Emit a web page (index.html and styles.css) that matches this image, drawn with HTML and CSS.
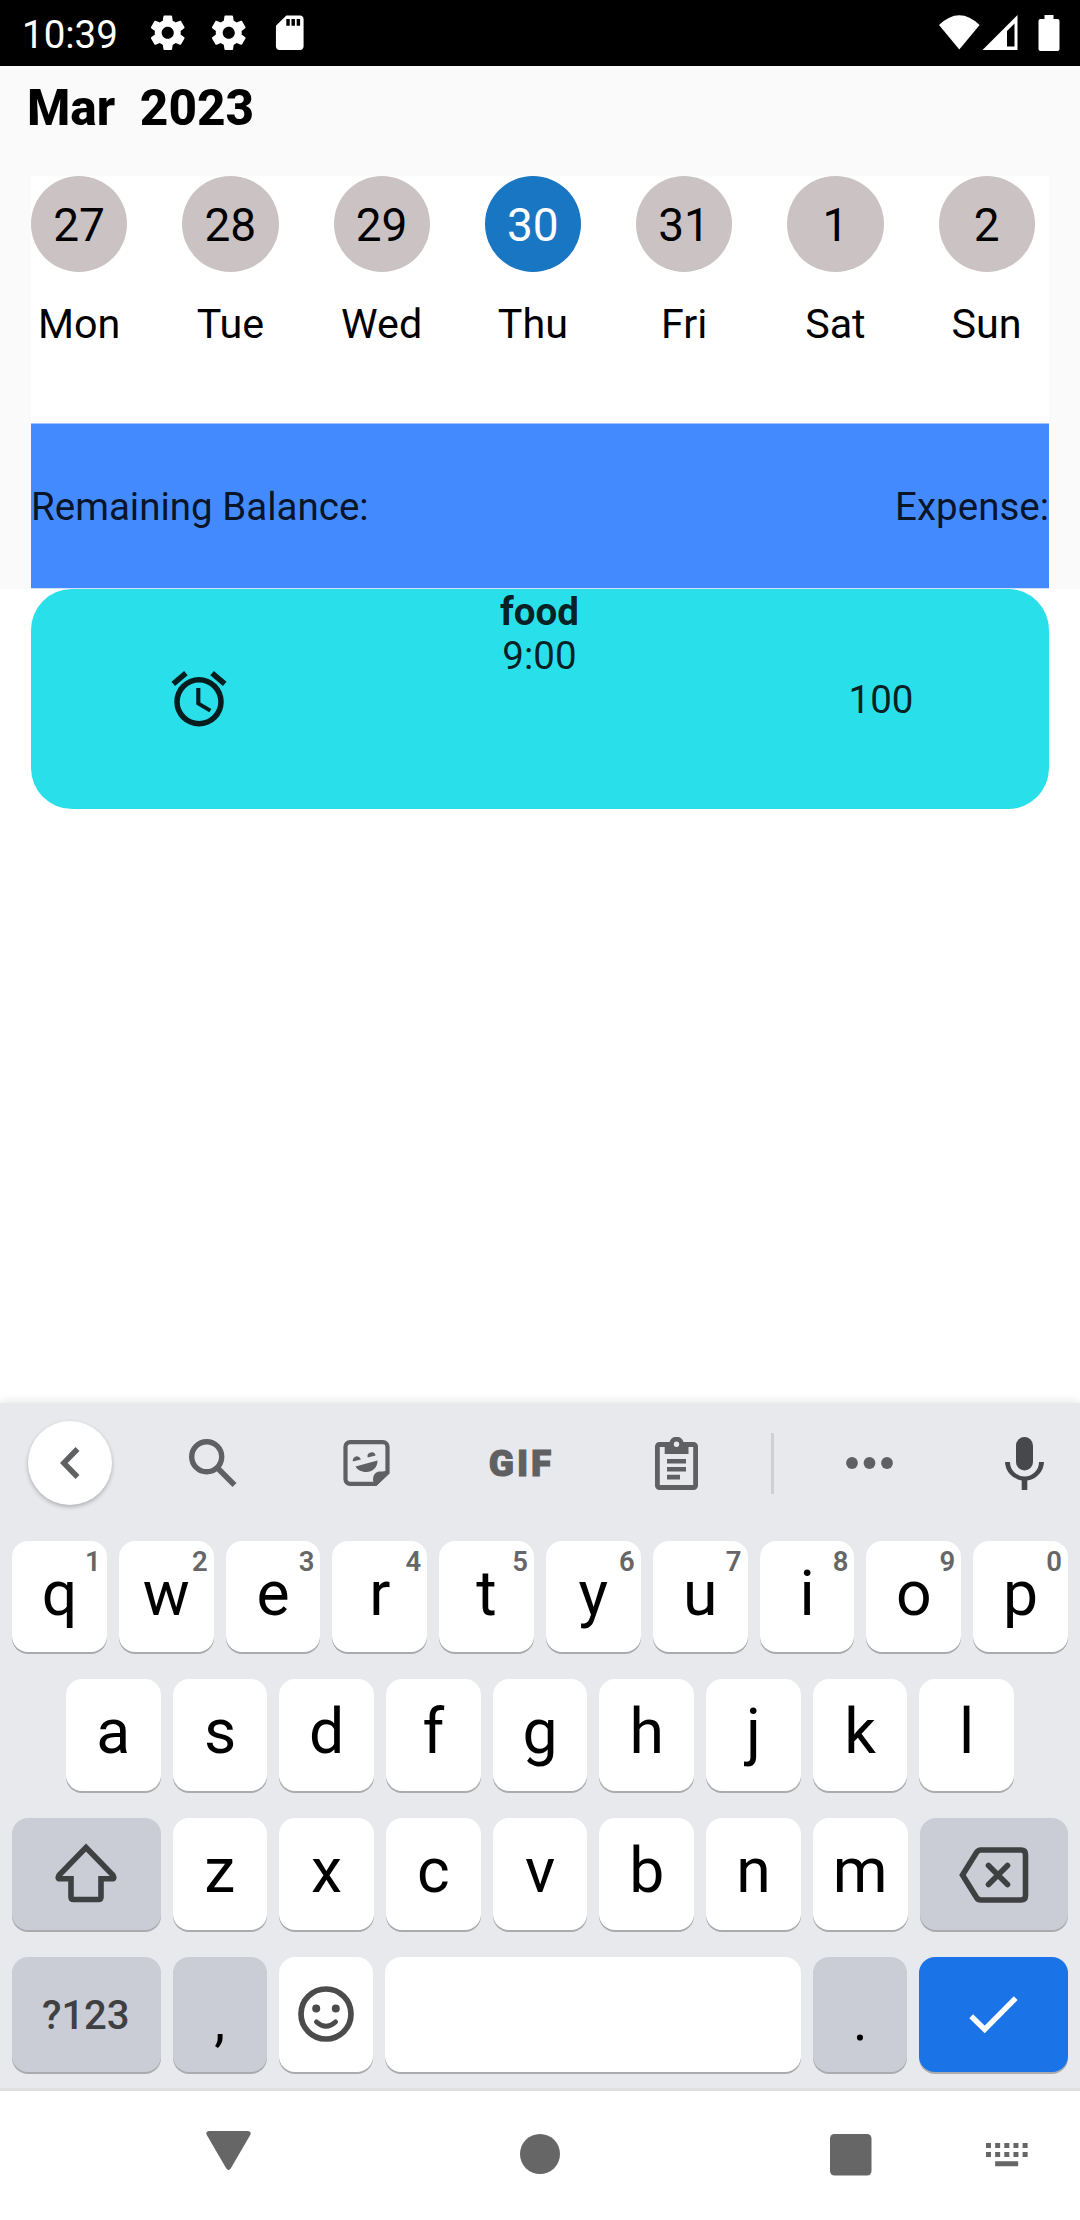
FILE: index.html
```html
<!DOCTYPE html>
<html lang="en">
<head>
<meta charset="utf-8">
<title>Expenses</title>
<link rel="stylesheet" href="styles.css">
</head>
<body>
<div class="screen">
  <header class="status">
    <span class="clock">10:39</span>
    <div class="notices">
      <svg class="notice" viewBox="0 0 24 24"><path d="M19.430 12.980c.04-.320.070-.640.070-.980s-.030-.660-.070-.980l2.110-1.650c.190-.150.240-.420.120-.640l-2-3.460c-.120-.220-.390-.300-.610-.220l-2.490 1c-.520-.400-1.080-.730-1.690-.980l-.380-2.650C14.460 2.180 14.250 2 14 2h-4c-.250 0-.460.180-.490.420l-.380 2.650c-.610.250-1.170.590-1.690.980l-2.490-1c-.230-.090-.490 0-.610.220l-2 3.460c-.130.220-.070.490.120.640l2.110 1.650c-.040.320-.070.650-.070.980s.030.660.070.980l-2.110 1.650c-.190.150-.240.420-.120.640l2 3.460c.120.220.390.300.610.220l2.490-1c.520.400 1.080.730 1.690.980l.380 2.650c.030.240.240.420.490.420h4c.250 0 .460-.180.490-.420l.380-2.650c.610-.250 1.170-.590 1.690-.980l2.490 1c.230.090.490 0 .610-.220l2-3.460c.120-.220.070-.490-.120-.640l-2.110-1.650zM12 15.500c-1.930 0-3.500-1.570-3.500-3.500s1.570-3.500 3.500-3.500 3.500 1.570 3.500 3.500-1.570 3.500-3.500 3.500z"/></svg>
      <svg class="notice" viewBox="0 0 24 24"><path d="M19.430 12.980c.04-.320.070-.640.070-.980s-.030-.660-.070-.980l2.110-1.650c.190-.150.240-.420.120-.640l-2-3.460c-.120-.220-.390-.300-.610-.220l-2.490 1c-.520-.400-1.080-.730-1.690-.980l-.380-2.650C14.460 2.180 14.250 2 14 2h-4c-.250 0-.460.180-.490.420l-.380 2.650c-.610.250-1.170.590-1.690.980l-2.490-1c-.230-.090-.490 0-.610.220l-2 3.460c-.130.220-.070.490.120.640l2.110 1.650c-.040.320-.070.650-.070.980s.030.660.070.980l-2.110 1.650c-.190.150-.240.420-.120.640l2 3.460c.120.220.390.300.610.220l2.490-1c.520.400 1.080.730 1.690.980l.380 2.650c.030.240.240.420.490.420h4c.250 0 .460-.180.490-.420l.380-2.650c.610-.250 1.170-.590 1.690-.980l2.490 1c.230.090.490 0 .610-.220l2-3.460c.120-.220.070-.490-.120-.640l-2.110-1.650zM12 15.500c-1.930 0-3.500-1.570-3.500-3.500s1.570-3.500 3.500-3.500 3.500 1.570 3.500 3.500-1.570 3.500-3.500 3.500z"/></svg>
      <svg class="notice" viewBox="0 0 24 24"><path d="M18 2h-8L4.020 8 4 20c0 1.100.9 2 2 2h12c1.100 0 2-.9 2-2V4c0-1.100-.9-2-2-2zm-6 6h-2V4h2v4zm3 0h-2V4h2v4zm3 0h-2V4h2v4z"/></svg>
    </div>
    <svg class="system" viewBox="0 0 120 36">
      <path d="M0 10Q20.300-9.500 40.600 10L20.300 34.500Z"/>
      <path fill-rule="evenodd" d="M43.500 35 78.500 0V35ZM68 16V31.500H75.500V8.500Z"/>
      <path d="M105.500 0h9v4h4a2 2 0 0 1 2 2v28a2 2 0 0 1-2 2h-17a2 2 0 0 1-2-2v-28a2 2 0 0 1 2-2h4z"/>
    </svg>
  </header>

  <main class="app">
    <section class="top">
      <h1 class="month">Mar  2023</h1>
      <div class="week">
        <div class="day"><span class="date">27</span><span class="name">Mon</span></div>
        <div class="day"><span class="date">28</span><span class="name">Tue</span></div>
        <div class="day"><span class="date">29</span><span class="name">Wed</span></div>
        <div class="day"><span class="date selected">30</span><span class="name">Thu</span></div>
        <div class="day"><span class="date">31</span><span class="name">Fri</span></div>
        <div class="day"><span class="date">1</span><span class="name">Sat</span></div>
        <div class="day"><span class="date">2</span><span class="name">Sun</span></div>
      </div>
      <div class="balance"><span>Remaining Balance:</span><span>Expense:</span></div>
    </section>
    <article class="entry">
      <svg class="alarm" viewBox="0 0 24 24"><path d="M22 5.720l-4.600-3.860-1.290 1.530 4.600 3.860L22 5.720zM7.880 3.390L6.600 1.860 2 5.710l1.290 1.530 4.590-3.850zM12.500 8H11v6l4.750 2.850.75-1.230-4-2.370V8zM12 4a9 9 0 1 0 0 18 9 9 0 0 0 0-18zm0 16a7 7 0 1 1 0-14 7 7 0 0 1 0 14z"/></svg>
      <div class="what"><b>food</b><span>9:00</span></div>
      <span class="amount">100</span>
    </article>
  </main>

  <section class="keyboard">
    <div class="tools">
      <span class="back"><svg width="20" height="32" viewBox="0 0 20 32"><path class="line" d="M17.500 2 3.800 16 17.500 30" stroke-width="5.500"/></svg></span>
      <svg width="48" height="48" viewBox="0 0 48 48"><circle class="line" cx="17.700" cy="17.700" r="15" stroke-width="5.400"/><path class="line" d="M29 29.500 45.500 46" stroke-width="5.600"/></svg>
      <svg width="47" height="46" viewBox="0 0 47 46"><path class="line" d="M7 2.200h33a4.500 4.500 0 0 1 4.500 4.500v25.800L32.500 43.800H7a4.500 4.500 0 0 1-4.500-4.500V6.700A4.500 4.500 0 0 1 7 2.200z" stroke-width="4.200"/><path d="M32 45.500C27.500 38 31.500 30.500 38 31.500Q42 32 45.500 29.500L46 33 33.500 45.500zM12.500 26.500 34.500 20.500C34.500 28 29 32 23.500 32 18 32 14 29.500 12.500 26.500zM9.900 21.600a4 4 0 1 1 8-2.200zM24.700 17.600a4 4 0 1 1 7.900-2.200z"/></svg>
      <span class="gif">GIF</span>
      <svg width="43" height="53" viewBox="0 0 43 53"><path fill-rule="evenodd" d="M4.500 5H14.500A7.300 7.300 0 0 1 28.500 5H38.500A4.500 4.500 0 0 1 43 9.500V48.500A4.500 4.500 0 0 1 38.500 53H4.500A4.500 4.500 0 0 1 0 48.500V9.500A4.500 4.500 0 0 1 4.500 5zM4.800 10V48H38.200V10H33.500V17H9.700V10zM21.500 4.500a2.700 2.700 0 1 0 0 5.400 2.700 2.700 0 0 0 0-5.400z"/><path d="M12 22h19v4.600H12zM12 30h19v4.600H12zM12 37.800h13v4.700H12z"/></svg>
      <span class="divider"></span>
      <svg width="47" height="12" viewBox="0 0 47 12"><circle cx="6" cy="6" r="5.900"/><circle cx="23.500" cy="6" r="5.900"/><circle cx="41" cy="6" r="5.900"/></svg>
      <svg class="mic" width="39" height="53" viewBox="0 0 39 53"><rect x="11" y="0" width="17" height="33.500" rx="8.500"/><path d="M0 25H5A14.500 14.500 0 0 0 34 25H39A19.500 19.500 0 0 1 22.300 43.500V53H16.700V43.500A19.500 19.500 0 0 1 0 25z"/></svg>
    </div>

    <div class="row row-1">
      <span class="key">q<sup>1</sup></span><span class="key">w<sup>2</sup></span><span class="key">e<sup>3</sup></span><span class="key">r<sup>4</sup></span><span class="key">t<sup>5</sup></span><span class="key">y<sup>6</sup></span><span class="key">u<sup>7</sup></span><span class="key">i<sup>8</sup></span><span class="key">o<sup>9</sup></span><span class="key">p<sup>0</sup></span>
    </div>
    <div class="row row-2">
      <span class="key">a</span><span class="key">s</span><span class="key">d</span><span class="key">f</span><span class="key">g</span><span class="key">h</span><span class="key">j</span><span class="key">k</span><span class="key">l</span>
    </div>
    <div class="row row-3">
      <span class="key wide gray"><svg class="shift" width="62" height="60" viewBox="0 0 62 60"><path class="line" d="M31 4.500 58 32.300Q60 35.700 57 35.700H46V54Q46 56.500 43.500 56.500H18.500Q16 56.500 16 54V35.700H5Q2 35.700 4 32.300Z" stroke-width="5.600"/></svg></span>
      <span class="key">z</span><span class="key">x</span><span class="key">c</span><span class="key">v</span><span class="key">b</span><span class="key">n</span><span class="key">m</span>
      <span class="key wide gray"><svg class="erase" width="70" height="56" viewBox="0 0 70 56"><path class="line" d="M3.500 28 17.500 5.500Q19 3 22 3H62Q66.500 3 66.500 7.500V48.500Q66.500 53 62 53H22Q19 53 17.500 50.500Z" stroke-width="5.600"/><path class="line" d="M29.500 18.500 48.500 37.500M48.500 18.500 29.500 37.500" stroke-width="5.600" stroke-linecap="round"/></svg></span>
    </div>
    <div class="row row-4">
      <span class="key wide gray symbols">?123</span>
      <span class="key gray punct">,</span>
      <span class="key"><svg class="smile" width="56" height="56" viewBox="0 0 56 56"><circle class="line" cx="28" cy="28" r="25" stroke-width="5.700"/><circle cx="18.200" cy="22.600" r="4"/><circle cx="37.800" cy="22.600" r="4"/><path class="line" d="M18.500 36Q28 44.500 37.500 36" stroke-width="5" stroke-linecap="round"/></svg></span>
      <span class="key space"></span>
      <span class="key gray punct">.</span>
      <span class="key wide enter"><svg width="49" height="38" viewBox="0 0 49 38"><path class="line" d="M2.200 20.200 15.700 33.400 46.700 2.200" stroke-width="5.400"/></svg></span>
    </div>
  </section>

  <nav class="nav">
    <svg width="45" height="39" viewBox="0 0 45 39"><path d="M3 0H42Q46 .5 44.200 4L25 37Q22.500 41 20 37L.8 4Q-1 .5 3 0z"/></svg>
    <svg width="40" height="40" viewBox="0 0 40 40"><circle cx="20" cy="20" r="20"/></svg>
    <svg width="42" height="42" viewBox="0 0 42 42"><rect width="41.500" height="41.500" rx="4.500"/></svg>
    <svg width="42" height="24" viewBox="0 0 42 24"><path d="M0 0h5v5H0zM9.150 0h5v5h-5zM18.300 0h5v5h-5zM27.450 0h5v5h-5zM36.600 0h5v5h-5zM0 9h5v5H0zM9.150 9h5v5h-5zM18.300 9h5v5h-5zM27.450 9h5v5h-5zM36.600 9h5v5h-5zM9.150 18.200h23v5h-23z"/></svg>
  </nav>
</div>
</body>
</html>
```
FILE: styles.css
```css
* { box-sizing: border-box; }
body { margin: 0; background: #fff; font-family: Roboto, "Liberation Sans", sans-serif; }
svg { display: block; fill: currentColor; flex: none; }
.line { fill: none; stroke: currentColor; }

.screen { width: 1080px; height: 2220px; display: flex; flex-direction: column; overflow: hidden; background: #fff; }

.status { height: 66px; background: #000; color: #fff; display: flex; align-items: center; padding: 0 21px 0 22px; }
.clock { font-size: 38.500px; line-height: 46px; padding-top: 3px; }
.notices { display: flex; gap: 19.500px; margin-left: 29.500px; }
.notice { width: 41.500px; height: 41.500px; }
.system { width: 120px; height: 36px; margin-left: auto; overflow: visible; }

.app { flex: 1; }
.top { background: #fafafa; padding: 0 31px; height: 523px; }
.month { margin: 0 0 26px -4px; font-size: 49.500px; line-height: 84px; font-weight: 800; white-space: pre; color: #000; }
.week { height: 247px; background: #fff; display: flex; gap: 55px; }
.day { width: 96.250px; flex: none; display: flex; flex-direction: column; align-items: center; color: #000; }
.date { width: 96.250px; height: 96px; border-radius: 50%; background: #cbc2c3; display: flex; align-items: center; justify-content: center; font-size: 46px; padding-top: 2px; }
.date.selected { background: #1976c3; color: #fff; }
.name { margin-top: 22px; font-size: 41.250px; line-height: 60px; }
.balance { height: 166px; background: #448aff; border-top: 1px solid #a1c4ff; border-bottom: 1px solid #d5e1fa; display: flex; align-items: center; justify-content: space-between; font-size: 38.500px; color: rgba(0,0,0,.87); }

.entry { height: 220px; margin: 0 31px; border-radius: 41px; background: #29dfea; color: rgba(0,0,0,.87); display: grid; grid-template-columns: 335px 347px 336px; font-size: 38.500px; align-items: center; justify-items: center; }
.alarm { width: 66px; height: 66px; }
.what { align-self: start; padding-top: 1px; display: flex; flex-direction: column; align-items: center; line-height: 44px; }

.keyboard { height: 688px; background: #e8e9ed; border-bottom: 3px solid #dfdfdf; box-shadow: 0 0 10px rgba(0,0,0,.14); }
.tools { height: 120px; margin-bottom: 18px; display: grid; grid-template-columns: 139px 148px 158px 150px 163px 29px 164.500px 1fr; align-items: center; justify-items: center; color: #5f6062; }
.back { width: 84px; height: 84px; border-radius: 50%; background: #fff; display: flex; align-items: center; justify-content: center; box-shadow: 0 2px 4px rgba(0,0,0,.25); }
.gif { font-size: 37px; font-weight: 900; letter-spacing: 3px; margin-right: -3px; -webkit-text-stroke: 1px currentColor; }
.divider { width: 3px; height: 61px; background: #ced0d4; }
.mic { color: #47484a; justify-self: end; margin-right: 36px; }

.row { display: flex; gap: 12px; padding: 0 12px; }
.row-1 { height: 111px; margin-bottom: 27px; }
.row-2 { height: 112px; margin-bottom: 27px; padding: 0 66px; }
.row-3 { height: 112px; margin-bottom: 27px; }
.row-4 { height: 115px; }
.key { flex: 1 1 0; min-width: 0; position: relative; display: flex; align-items: center; justify-content: center; background: #fff; border-radius: 16px; box-shadow: 0 2px 0 #a9abad; font-size: 62.500px; line-height: 74px; padding-bottom: 6px; color: #000; }
.key sup { position: absolute; top: 5px; right: 6px; font-size: 27.500px; line-height: 32px; font-weight: 600; color: #666; }
.key.wide { flex: 0 0 148.500px; }
.gray { background: #cbcdd6; }
.shift, .erase, .smile { color: #3f4041; }
.shift { margin-top: 4px; }
.erase { margin-top: 8px; }
.smile { color: #4b4b4b; margin-top: 5px; }
.symbols { font-size: 40px; font-weight: 500; color: #3f4041; padding: 3px 1px 0 0; }
.punct { font-size: 55px; padding-bottom: 0; padding-top: 13px; }
.space { flex: 0 0 416px; }
.enter { background: #1b73e8; color: #fff; padding-bottom: 0; }

.nav { height: 129px; background: #fff; color: #666; display: flex; align-items: flex-start; padding: 43px 52px 0 206px; }
.nav svg:nth-child(1) { margin-top: -3px; }
.nav svg:nth-child(2) { margin-left: 269px; }
.nav svg:nth-child(3) { margin-left: 270px; }
.nav svg:nth-child(4) { margin: 9px 0 0 114px; }
```
